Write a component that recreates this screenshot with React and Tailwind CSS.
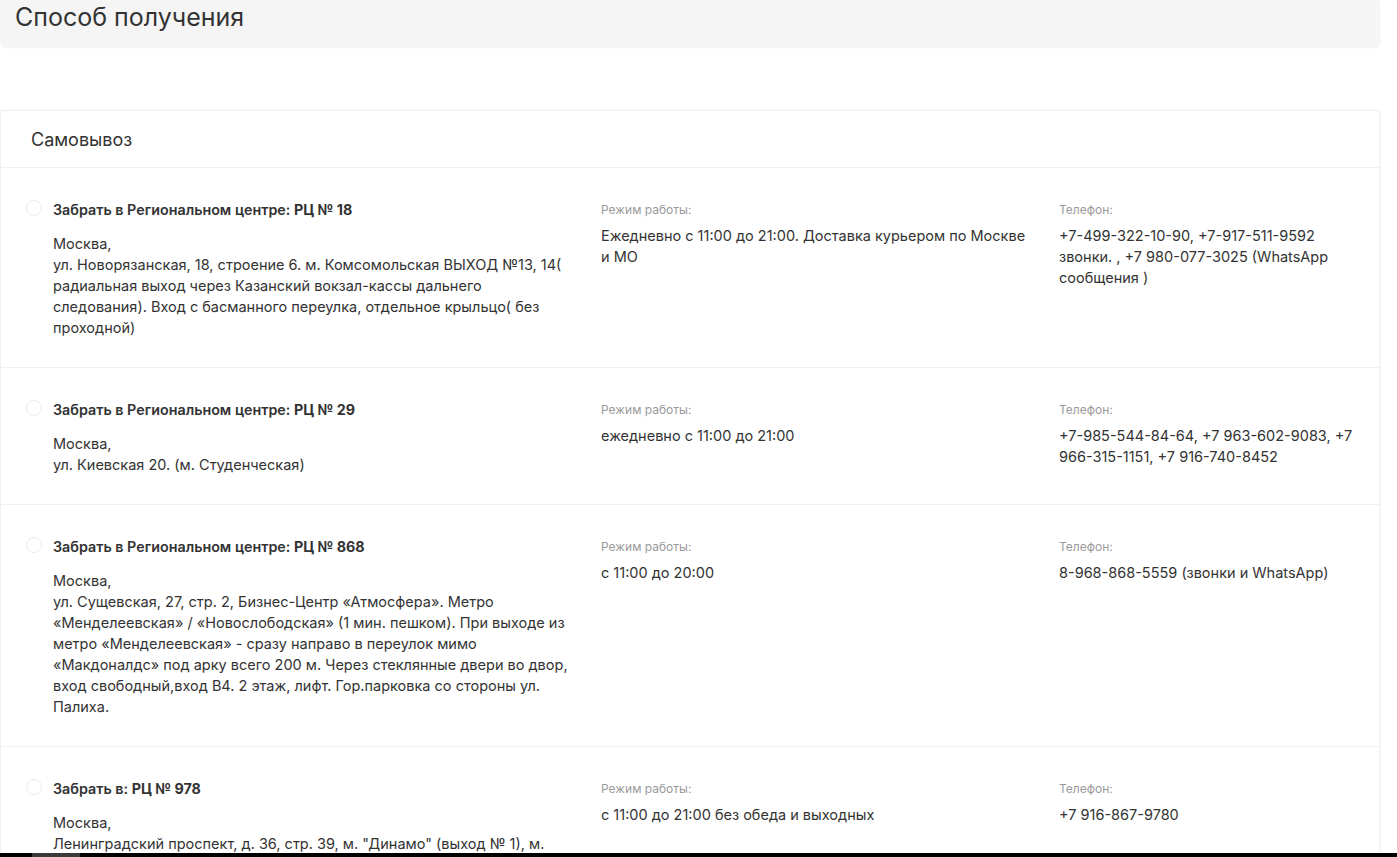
import React from "react";

const rows = [
  {
    title: "Забрать в Региональном центре: ",
    bold: "РЦ № 18",
    addr: [
      "Москва,",
      "ул. Новорязанская, 18, строение 6. м. Комсомольская ВЫХОД №13, 14( радиальная выход через Казанский вокзал-кассы дальнего следования). Вход с басманного переулка, отдельное крыльцо( без проходной)",
    ],
    hours: "Ежедневно с 11:00 до 21:00. Доставка курьером по Москве и МО",
    phone: "+7-499-322-10-90, +7-917-511-9592 звонки. , +7 980-077-3025 (WhatsApp сообщения )",
  },
  {
    title: "Забрать в Региональном центре: ",
    bold: "РЦ № 29",
    addr: ["Москва,", "ул. Киевская 20. (м. Студенческая)"],
    hours: "ежедневно с 11:00 до 21:00",
    phone: "+7-985-544-84-64, +7 963-602-9083, +7 966-315-1151, +7 916-740-8452",
  },
  {
    title: "Забрать в Региональном центре: ",
    bold: "РЦ № 868",
    addr: [
      "Москва,",
      "ул. Сущевская, 27, стр. 2, Бизнес-Центр «Атмосфера». Метро «Менделеевская» / «Новослободская» (1 мин. пешком). При выходе из метро «Менделеевская» - сразу направо в переулок мимо «Макдоналдс» под арку всего 200 м. Через стеклянные двери во двор, вход свободный,вход В4. 2 этаж, лифт. Гор.парковка со стороны ул. Палиха.",
    ],
    hours: "с 11:00 до 20:00",
    phone: "8-968-868-5559 (звонки и WhatsApp)",
  },
  {
    title: "Забрать в: ",
    bold: "РЦ № 978",
    addr: [
      "Москва,",
      "Ленинградский проспект, д. 36, стр. 39, м. \"Динамо\" (выход № 1), м. Петровский парк (выход № 2)",
    ],
    hours: "с 11:00 до 21:00 без обеда и выходных",
    phone: "+7 916-867-9780",
  },
];

function Row({ r }) {
  return (
    <div className="flex border-t border-[#f0f0f0] pt-[32px] pb-[29px] pl-[25px]">
      <div className="flex w-[575px] shrink-0">
        <div className="h-[16px] w-[16px] shrink-0 rounded-full border border-[#ebebeb] bg-white" />
        <div className="ml-[11px] w-[520px]">
          <div className="text-[14.3px] leading-[20px] font-semibold text-[#333]">
            {r.title}
            <span className="font-bold">{r.bold}</span>
          </div>
          <div className="mt-[13px] text-[14.5px] leading-[21px] text-[#333]">
            {r.addr.map((a, i) => (
              <div key={i}>{a}</div>
            ))}
          </div>
        </div>
      </div>
      <div className="w-[458px] shrink-0 pr-[24px]">
        <div className="text-[12px] leading-[20px] text-[#9a9a9a]">Режим работы:</div>
        <div className="mt-[5px] text-[14.5px] leading-[21px] text-[#333]">{r.hours}</div>
      </div>
      <div className="w-[300px] shrink-0">
        <div className="text-[12px] leading-[20px] text-[#9a9a9a]">Телефон:</div>
        <div className="mt-[5px] text-[14.5px] leading-[21px] text-[#333]">{r.phone}</div>
      </div>
    </div>
  );
}

export default function App() {
  return (
    <div
      className="flex h-[857px] w-[1397px] flex-col overflow-hidden bg-white"
      style={{ fontFamily: "Inter, 'Noto Sans', sans-serif" }}
    >
      <div className="flex-1 overflow-hidden">
        <div className="h-[48px] w-[1380px] rounded-b-[6px] bg-[#f5f5f5] px-[15px] pt-[2px] shadow-[0_0_3px_rgba(0,0,0,0.04)]">
          <h1 className="text-[25px] leading-[30px] font-normal text-[#333]">Способ получения</h1>
        </div>
        <div className="mt-[62px] w-[1380px] border border-[#f0f0f0] shadow-[1px_0_3px_rgba(0,0,0,0.03)]">
          <div className="flex h-[56px] items-center px-[30px] text-[18px] text-[#333]">Самовывоз</div>
          {rows.map((r, i) => (
            <Row key={i} r={r} />
          ))}
        </div>
      </div>
      <div className="flex h-[4px] shrink-0 bg-black">
        <div className="ml-[32px] w-[48px] bg-[#3a3a3a]" />
      </div>
    </div>
  );
}
